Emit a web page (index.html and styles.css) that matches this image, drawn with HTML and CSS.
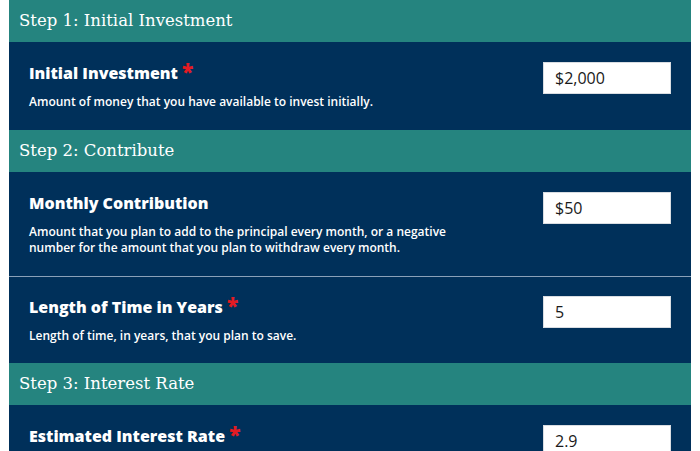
FILE: index.html
```html
<!DOCTYPE html>
<html>
<head>
<meta charset="utf-8">
<link rel="stylesheet" href="styles.css">
</head>
<body>
<div class="panel">
  <div class="step">Step 1: Initial Investment</div>
  <div class="row">
    <div class="info">
      <div class="label">Initial Investment <span class="req">*</span></div>
      <div class="desc">Amount of money that you have available to invest initially.</div>
    </div>
    <div class="field">$2,000</div>
  </div>
  <div class="step">Step 2: Contribute</div>
  <div class="row">
    <div class="info">
      <div class="label">Monthly Contribution</div>
      <div class="desc">Amount that you plan to add to the principal every month, or a negative<br>number for the amount that you plan to withdraw every month.</div>
    </div>
    <div class="field">$50</div>
  </div>
  <div class="row sep">
    <div class="info">
      <div class="label">Length of Time in Years <span class="req">*</span></div>
      <div class="desc">Length of time, in years, that you plan to save.</div>
    </div>
    <div class="field">5</div>
  </div>
  <div class="step">Step 3: Interest Rate</div>
  <div class="row">
    <div class="info">
      <div class="label">Estimated Interest Rate <span class="req">*</span></div>
      <div class="desc">Your estimated annual interest rate.</div>
    </div>
    <div class="field">2.9</div>
  </div>
</div>
</body>
</html>
```
FILE: styles.css
```css
html, body {
  margin: 0;
  padding: 0;
  background: #ffffff;
}
.panel {
  margin: 0 9px;
  background: #00305a;
}
.step {
  background: #25847f;
  color: #ffffff;
  font-family: "DejaVu Serif", serif;
  font-size: 16.5px;
  height: 42px;
  line-height: 41px;
  padding-left: 10px;
}
.row {
  display: flex;
  justify-content: space-between;
  align-items: flex-start;
  padding: 20px 20px 20px 20px;
}
.row.sep {
  border-top: 1px solid #8aa0b8;
  padding-top: 19px;
  padding-bottom: 19px;
}
.info {
  color: #ffffff;
  font-family: "Open Sans", sans-serif;
}
.label {
  font-size: 16px;
  font-weight: 800;
  line-height: 22px;
}
.req {
  color: #e31b23;
  font-size: 21px;
  vertical-align: top;
  line-height: 18px;
}
.desc {
  font-size: 12px;
  font-weight: 600;
  line-height: 16px;
  margin-top: 10px;
}
.field {
  width: 128px;
  height: 32px;
  box-sizing: border-box;
  background: #ffffff;
  border: 1px solid #d9dde2;
  padding-left: 11px;
  font-family: "Open Sans", sans-serif;
  font-size: 16px;
  line-height: 30px;
  color: #1a1a1a;
}
```
